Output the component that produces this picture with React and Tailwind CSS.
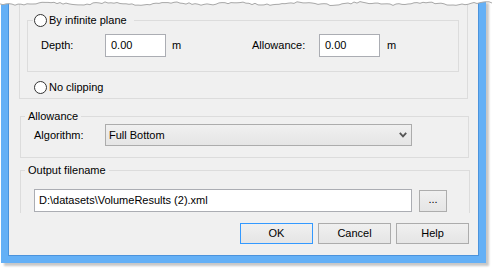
import React from 'react';

// jagged "torn paper" edge along the top of the screenshot
const tearPoints = (() => {
  let seed = 11;
  const pts = [];
  for (let x = 0; x <= 492; x += 3) {
    seed = (seed * 9301 + 49297) % 233280;
    const r = seed / 233280;
    const y = 3.6 + Math.sin(x / 10) * 1.1 + (r - 0.5) * 1.8;
    pts.push(`${x},${y.toFixed(1)}`);
  }
  return pts;
})();

const Radio = () => (
  <span className="w-[13px] h-[13px] rounded-full border border-[#333333] bg-white shrink-0" />
);

const TextBox = ({ value, className }) => (
  <div className={`h-[23px] border border-[#abadb3] bg-white flex items-center ${className}`}>
    {value}
  </div>
);

const Button = ({ children, primary }) => (
  <button
    className={`w-[73px] h-[21px] border ${primary ? 'border-[#3399ff]' : 'border-[#acacac]'} bg-gradient-to-b from-[#f0f0f0] to-[#e5e5e5] text-[11px] leading-none text-black`}
  >
    {children}
  </button>
);

const Legend = ({ children, className }) => (
  <div className={`-mt-[7px] w-fit h-[13px] bg-[#f0f0f0] flex items-center leading-[13px] ${className}`}>
    {children}
  </div>
);

export default function App() {
  return (
    <div
      className="relative w-[492px] h-[269px] bg-white overflow-hidden text-[11px] text-black"
      style={{ fontFamily: '"Liberation Sans", Arial, sans-serif' }}
    >
      <div className="ml-px w-[485px] h-[263px] bg-[#64b0f6] px-[7px] pb-[7px] flex flex-col shadow-[3px_3px_2px_rgba(0,0,0,0.22)]">
        <div className="flex-1 bg-[#f0f0f0] border-x border-b border-[#4b93dc] flex flex-col">
          {/* clipping group (top cut off) */}
          <div className="ml-[10px] w-[449px] h-[99px] border-x border-b border-[#dcdcdc] pl-[7px]">
            <div className="mt-[20px] w-[432px] h-[52px] border border-[#dcdcdc] flex flex-col">
              <Legend className="ml-[5px] pl-px pr-[7px] gap-[2px] -mt-[6px]">
                <Radio />
                <span>By infinite plane</span>
              </Legend>
              <div className="mt-[7px] ml-[13px] flex items-center">
                <div className="w-[211px] flex items-center">
                  <span className="w-[64px]">Depth:</span>
                  <TextBox value="0.00" className="w-[61px] pl-[5px]" />
                  <span className="ml-[6px]">m</span>
                </div>
                <span className="w-[67px]">Allowance:</span>
                <TextBox value="0.00" className="w-[61px] pl-[5px]" />
                <span className="ml-[7px]">m</span>
              </div>
            </div>
            <div className="mt-[9px] ml-[7px] flex items-center gap-[2px] leading-[13px]">
              <Radio />
              <span>No clipping</span>
            </div>
          </div>

          {/* Allowance */}
          <div className="mt-[17px] ml-[11px] w-[449px] h-[42px] border border-[#dcdcdc] flex flex-col">
            <Legend className="ml-[4px] px-[3px]">Allowance</Legend>
            <div className="mt-px ml-[13px] flex items-center">
              <span className="w-[71px]">Algorithm:</span>
              <div className="w-[307px] h-[22px] border border-[#acacac] bg-gradient-to-b from-[#f0f0f0] to-[#e5e5e5] flex items-center justify-between pl-[3px] pr-[4px]">
                <span>Full Bottom</span>
                <svg width="8" height="6" viewBox="0 0 8 6">
                  <polyline points="0.8,0.8 4,4.4 7.2,0.8" fill="none" stroke="#555555" strokeWidth="1.8" />
                </svg>
              </div>
            </div>
          </div>

          {/* Output filename */}
          <div className="mt-[12px] ml-[11px] w-[450px] h-[43px] border-x border-t border-[#dcdcdc] flex flex-col">
            <Legend className="ml-[4px] px-[3px]">Output filename</Legend>
            <div className="mt-[12px] ml-[13px] flex items-start">
              <TextBox value="D:\datasets\VolumeResults (2).xml" className="w-[378px] pl-[4px]" />
              <button className="mt-px ml-[7px] w-[28px] h-[22px] border border-[#adadad] bg-gradient-to-b from-[#f0f0f0] to-[#e5e5e5] leading-none pb-[3px]">
                ...
              </button>
            </div>
          </div>

          <div className="mt-[10px] pr-[9px] flex justify-end gap-[5px]">
            <Button primary>OK</Button>
            <Button>Cancel</Button>
            <Button>Help</Button>
          </div>
        </div>
      </div>

      {/* torn top edge */}
      <svg className="absolute top-0 left-0" width="492" height="9" viewBox="0 0 492 9">
        <path d={`M0,0 L${tearPoints.join(' L')} L492,0 Z`} fill="#ffffff" />
        <polyline points={tearPoints.join(' ')} fill="none" stroke="#a8a8a8" strokeWidth="1" />
      </svg>
    </div>
  );
}
